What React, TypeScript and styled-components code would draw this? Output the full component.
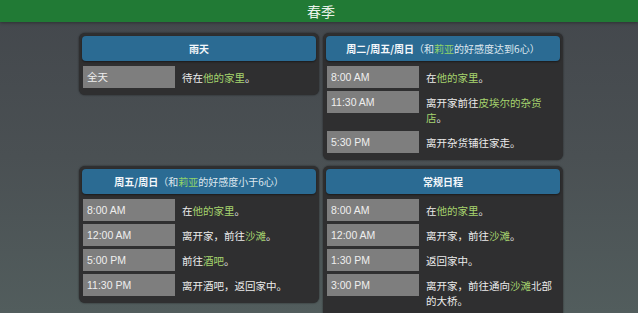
import { createGlobalStyle } from "styled-components";
import styled from "styled-components";

const GlobalStyle = createGlobalStyle`
  html, body {
    margin: 0;
    padding: 0;
    height: 100%;
  }
  body {
    background: linear-gradient(to bottom, #43474c 0%, #4a5053 50%, #525d5d 100%);
    font-family: "Liberation Sans", "Noto Sans CJK SC", sans-serif;
    color: #e8e8e8;
    overflow: hidden;
  }
`;

const SeasonBar = styled.div`
  height: 22px;
  background: #217a35;
  box-shadow: 0 1px 3px rgba(0, 0, 0, 0.35);
  display: flex;
  align-items: center;
  justify-content: center;
  padding-left: 4px;
  color: #e9f3ea;
  font-size: 14px;
  font-family: "Noto Sans CJK SC", sans-serif;
`;

const Board = styled.div`
  display: grid;
  grid-template-columns: 240px 240px;
  column-gap: 4px;
  row-gap: 6px;
  align-items: start;
  justify-content: center;
  padding: 11px 0 0 4px;
`;

const Card = styled.div`
  background: #2f2f30;
  border-radius: 6px;
  box-shadow: 0 0 2px rgba(0, 0, 0, 0.6);
  padding: 3px 3px 7px;
`;

const CardHead = styled.div`
  height: 25px;
  background: #2b6b93;
  border-radius: 4px;
  box-shadow: 0 1px 2px rgba(0, 0, 0, 0.45);
  display: flex;
  align-items: center;
  justify-content: center;
  font-family: "Noto Sans CJK SC", sans-serif;
  font-size: 10px;
  color: #dfe8ef;
  margin-bottom: 5px;

  b {
    color: #f4f7fa;
    font-weight: 700;
  }
`;

const Rows = styled.div`
  display: flex;
  flex-direction: column;
  gap: 3px;
  padding: 0 1px;
`;

const Row = styled.div`
  display: grid;
  grid-template-columns: 92px 1fr;
  column-gap: 7px;
  align-items: start;
`;

const Time = styled.div`
  height: 22px;
  background: #7e7e7e;
  color: #eeeeee;
  font-size: 10.5px;
  line-height: 22px;
  padding-left: 4px;
`;

const Note = styled.div`
  font-family: "Noto Sans CJK SC", sans-serif;
  font-size: 10.5px;
  line-height: 15px;
  padding: 4px 0 3px;
  color: #ebebeb;
`;

const Place = styled.span<{ $tone?: "bright" }>`
  color: ${(p) => (p.$tone === "bright" ? "#8fd36a" : "#a6d46e")};
`;

type Entry = { time: string; note: React.ReactNode };

const home = (
  <>
    在<Place>他的家里</Place>。
  </>
);

const beach = (
  <>
    离开家，前往<Place>沙滩</Place>。
  </>
);

const schedules: { title: React.ReactNode; rows: Entry[] }[] = [
  {
    title: <b>雨天</b>,
    rows: [
      {
        time: "全天",
        note: (
          <>
            待在<Place>他的家里</Place>。
          </>
        ),
      },
    ],
  },
  {
    title: (
      <>
        <b>周二/周五/周日</b>（和<Place $tone="bright">莉亚</Place>的好感度达到6心）
      </>
    ),
    rows: [
      { time: "8:00 AM", note: home },
      {
        time: "11:30 AM",
        note: (
          <>
            离开家前往<Place>皮埃尔的杂货店</Place>。
          </>
        ),
      },
      { time: "5:30 PM", note: "离开杂货铺往家走。" },
    ],
  },
  {
    title: (
      <>
        <b>周五/周日</b>（和<Place $tone="bright">莉亚</Place>的好感度小于6心）
      </>
    ),
    rows: [
      { time: "8:00 AM", note: home },
      { time: "12:00 AM", note: beach },
      {
        time: "5:00 PM",
        note: (
          <>
            前往<Place>酒吧</Place>。
          </>
        ),
      },
      { time: "11:30 PM", note: "离开酒吧，返回家中。" },
    ],
  },
  {
    title: <b>常规日程</b>,
    rows: [
      { time: "8:00 AM", note: home },
      { time: "12:00 AM", note: beach },
      { time: "1:30 PM", note: "返回家中。" },
      {
        time: "3:00 PM",
        note: (
          <>
            离开家，前往通向<Place>沙滩</Place>北部的大桥。
          </>
        ),
      },
    ],
  },
];

export default function App() {
  return (
    <>
      <GlobalStyle />
      <SeasonBar>春季</SeasonBar>
      <Board>
        {schedules.map((s, i) => (
          <Card key={i}>
            <CardHead>{s.title}</CardHead>
            <Rows>
              {s.rows.map((r, j) => (
                <Row key={j}>
                  <Time>{r.time}</Time>
                  <Note>{r.note}</Note>
                </Row>
              ))}
            </Rows>
          </Card>
        ))}
      </Board>
    </>
  );
}
